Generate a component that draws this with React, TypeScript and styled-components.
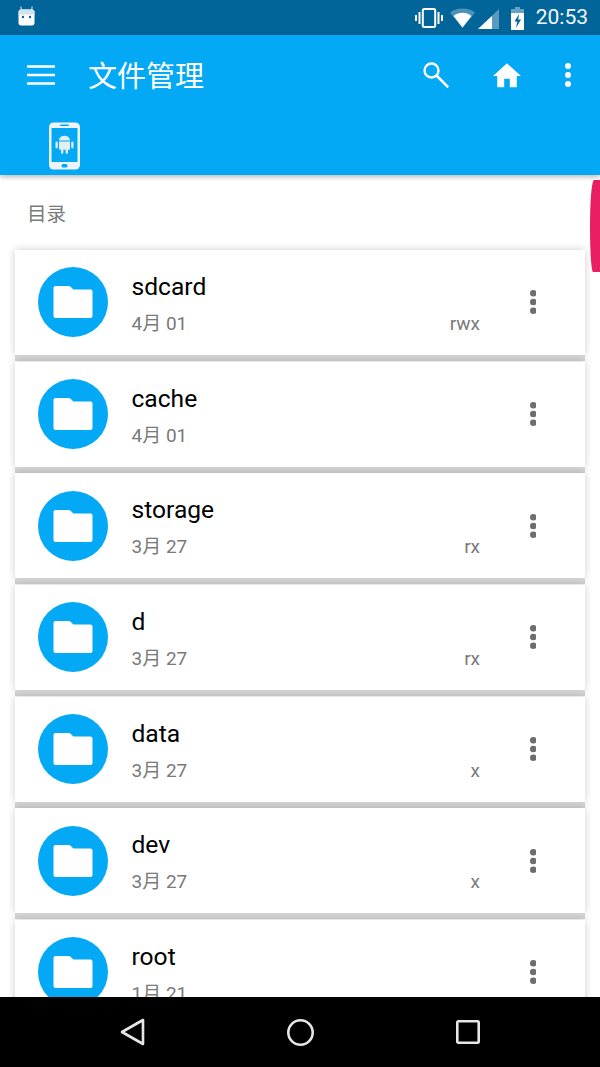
import React from "react";
import styled, { createGlobalStyle } from "styled-components";

const Global = createGlobalStyle`
  html, body { margin: 0; padding: 0; background: #fff; }
  * { box-sizing: border-box; }
`;

const FONT = `Roboto, "Noto Sans CJK SC", sans-serif`;

const Screen = styled.div`
  position: relative;
  width: 600px;
  height: 1067px;
  display: flex;
  flex-direction: column;
  overflow: hidden;
  background: #fff;
  font-family: ${FONT};
`;

const StatusBar = styled.div`
  flex: 0 0 35px;
  height: 35px;
  background: #01659a;
  display: flex;
  align-items: center;
  padding: 0 12px 0 18px;
  color: #fff;
`;

const StatusSpacer = styled.div`
  flex: 1;
`;

const StatusIcons = styled.div`
  display: flex;
  align-items: center;
`;

const Clock = styled.span`
  font-size: 21px;
  line-height: 35px;
  margin-left: 12px;
  color: #f2f7fa;
`;

const BotSvg = styled.svg`
  margin-top: -3px;
`;

const VibrateSvg = styled.svg`
  margin-right: 7px;
`;

const SignalSvg = styled.svg`
  margin: 3px 0 0 3px;
`;

const BatterySvg = styled.svg`
  margin: 2px 0 0 12px;
`;

const AppBar = styled.header`
  flex: 0 0 140px;
  height: 140px;
  background: #03a9f4;
  box-shadow: 0 2px 5px rgba(0, 0, 0, 0.28);
  z-index: 2;
  display: flex;
  flex-direction: column;
`;

const TitleRow = styled.div`
  height: 80px;
  display: flex;
  align-items: center;
  padding-left: 27px;
  color: #fff;
`;

const Title = styled.h1`
  margin: 4px 0 0 33px;
  flex: 1;
  font-size: 29px;
  font-weight: 400;
  line-height: 76px;
  color: #fff;
`;

const ActionGroup = styled.div`
  display: flex;
  align-items: center;
  gap: 44px;
  padding-right: 29px;
`;

const TabRow = styled.div`
  padding: 7px 0 0 49px;
  display: flex;
`;

const Content = styled.main`
  flex: 1;
  min-height: 0;
  overflow: hidden;
`;

const SectionLabel = styled.div`
  height: 74.9px;
  padding: 28px 0 0 27px;
  font-size: 19.5px;
  line-height: 24px;
  color: #7a7a7a;
`;

const List = styled.div`
  display: flex;
  flex-direction: column;
  padding: 0 15px;
  gap: 6.67px;
  position: relative;
`;

const Card = styled.article`
  flex: 0 0 105px;
  height: 105px;
  background: #fff;
  display: flex;
  align-items: center;
  padding-left: 23px;
  position: relative;
  box-shadow: 0 6px 0 #d4d4d4, 0 0 8px rgba(0, 0, 0, 0.2);
`;

const Avatar = styled.div`
  flex: 0 0 70px;
  width: 70px;
  height: 70px;
  border-radius: 50%;
  background: #03a9f4;
  display: flex;
  align-items: center;
  justify-content: center;
`;

const Info = styled.div`
  flex: 1;
  margin-left: 23.5px;
  display: flex;
  flex-direction: column;
  height: 105px;
  padding-top: 21px;
`;

const Name = styled.div`
  font-size: 24.6px;
  line-height: 32px;
  color: #000;
`;

const MetaRow = styled.div`
  margin-top: 9px;
  display: flex;
  justify-content: space-between;
  font-size: 19px;
  line-height: 24px;
  color: #7a7a7a;
`;

const MoreButton = styled.div`
  flex: 0 0 105px;
  padding-left: 1px;
  display: flex;
  justify-content: center;
`;

const Fab = styled.div`
  position: absolute;
  right: 0;
  top: 180px;
  width: 10px;
  height: 92px;
  border-radius: 4px 0 0 3px / 46px 0 0 46px;
  background: #e91e63;
  z-index: 1;
`;

const NavBar = styled.nav`
  flex: 0 0 70px;
  height: 70px;
  background: #000;
  display: flex;
  align-items: center;
  justify-content: center;
  z-index: 3;
  position: relative;
`;

const NavSlot = styled.div`
  width: 168px;
  display: flex;
  justify-content: center;
`;

const Folder = () => (
  <svg width="40" height="34" viewBox="0 0 40 34" aria-hidden="true">
    <path
      d="M2.500 1h13c1 0 1.700.4 2.300 1l2.700 2.500H37.500a2 2 0 0 1 2 2V31a2 2 0 0 1-2 2h-35a2 2 0 0 1-2-2V3a2 2 0 0 1 2-2z"
      fill="#fff"
    />
  </svg>
);

const Dots = ({ color, r, gap }: { color: string; r: number; gap: number }) => (
  <svg width={r * 2} height={r * 2 + gap * 2} aria-hidden="true">
    <circle cx={r} cy={r} r={r} fill={color} />
    <circle cx={r} cy={r + gap} r={r} fill={color} />
    <circle cx={r} cy={r + gap * 2} r={r} fill={color} />
  </svg>
);

const Bot = () => (
  <BotSvg width="17" height="20" viewBox="0 0 17 20" aria-hidden="true">
    <path d="M3.500 5 L2.800 0.500M13.500 5l.7-4.500" stroke="#b9d0dc" strokeWidth="1.300" />
    <path d="M.5 6C.5 4.500 1.500 3.500 3 3.500h11c1.500 0 2.500 1 2.500 2.500v11c0 1.500-1 2.500-2.500 2.500H3c-1.500 0-2.500-1-2.500-2.500z" fill="#fff" />
    <path d="M.5 6C.5 4.500 1.500 3.500 3 3.500h11c1.500 0 2.500 1 2.500 2.500v2.500H.5z" fill="#cfe3ec" />
    <circle cx="5" cy="11" r="1.200" fill="#01659a" />
    <circle cx="12" cy="11" r="1.200" fill="#01659a" />
  </BotSvg>
);

const Vibrate = () => (
  <VibrateSvg width="28" height="22" viewBox="0 0 28 22" aria-hidden="true">
    <rect x="7.800" y="2" width="12.400" height="18" rx="1.500" fill="none" stroke="#fff" strokeWidth="2" />
    <path d="M4.500 5v12M23.500 5v12" stroke="#fff" strokeWidth="2" fill="none" />
    <path d="M1 8v6M27 8v6" stroke="#fff" strokeWidth="2" fill="none" />
  </VibrateSvg>
);

const Wifi = () => (
  <svg width="25" height="20" viewBox="0 0 25 20" aria-hidden="true">
    <path d="M0 4.500C7-1 18-1 25 4.500L12.500 20z" fill="#fff" fillOpacity="0.3" />
    <path d="M3.500 8C9 3.800 16 3.800 21.500 8L12.500 19.500z" fill="#fff" />
  </svg>
);

const Signal = () => (
  <SignalSvg width="21" height="20" viewBox="0 0 21 20" aria-hidden="true">
    <path d="M0 20 21 0v20z" fill="#fff" fillOpacity="0.35" />
    <path d="M0 20 14 7v13z" fill="#fff" />
  </SignalSvg>
);

const Battery = () => (
  <BatterySvg width="13" height="23" viewBox="0 0 13 23" aria-hidden="true">
    <path d="M4 0h5v2h4v6H0V2h4z" fill="#fff" fillOpacity="0.4" />
    <path d="M0 6h13v17H0z" fill="#fff" />
    <path d="M8 7 3.500 14.500h2.800L5 21l5-8.500H7.200z" fill="#01659a" />
  </BatterySvg>
);

const Menu = () => (
  <svg width="28" height="20" viewBox="0 0 28 20" aria-hidden="true">
    <path d="M0 1.500h28M0 10h28M0 18.500h28" stroke="#fff" strokeWidth="2.600" fill="none" />
  </svg>
);

const Search = () => (
  <svg width="26" height="26" viewBox="0 0 26 26" aria-hidden="true">
    <circle cx="8.500" cy="8.500" r="7" fill="none" stroke="#fff" strokeWidth="2.400" />
    <path d="M13.500 13.500 25.200 25.200" stroke="#fff" strokeWidth="2.600" fill="none" />
  </svg>
);

const Home = () => (
  <svg width="28" height="25" viewBox="0 0 30 26" aria-hidden="true">
    <path d="M15 0 30 13.500h-4.500V25.500h-7.500V16.500h-6V25.500H4.500V13.500H0z" fill="#fff" />
  </svg>
);

const PhoneAndroid = () => (
  <svg width="31" height="48" viewBox="0 0 31 48" aria-hidden="true">
    <rect x="0" y="0.500" width="31" height="47" rx="4.500" fill="#eef3f5" />
    <rect x="2.500" y="6" width="26" height="34" fill="#03a9f4" />
    <rect x="11" y="2.500" width="9" height="1.600" rx="0.800" fill="#03a9f4" />
    <rect x="12.500" y="42" width="6" height="3.600" rx="1.500" fill="#03a9f4" />
    <path d="M10 18.500a5.500 4.800 0 0 1 11 0z" fill="#e3eef3" />
    <path d="M10 19.500h11v7c0 .8-.5 1.300-1.300 1.300H11.300c-.8 0-1.300-.5-1.300-1.300z" fill="#e3eef3" />
    <rect x="6.500" y="19.500" width="2.300" height="7" rx="1.150" fill="#e3eef3" />
    <rect x="22.200" y="19.500" width="2.300" height="7" rx="1.150" fill="#e3eef3" />
    <rect x="12" y="27" width="2.300" height="5" rx="1.150" fill="#e3eef3" />
    <rect x="16.700" y="27" width="2.300" height="5" rx="1.150" fill="#e3eef3" />
  </svg>
);

const Back = () => (
  <svg width="25" height="28" viewBox="0 0 25 28" aria-hidden="true">
    <path d="M23 2V26L2 14z" fill="none" stroke="#e6e6e6" strokeWidth="2.600" strokeLinejoin="round" />
  </svg>
);

const HomeNav = () => (
  <svg width="27" height="27" viewBox="0 0 27 27" aria-hidden="true">
    <circle cx="13.500" cy="13.500" r="12.200" fill="none" stroke="#e6e6e6" strokeWidth="2.600" />
  </svg>
);

const Recent = () => (
  <svg width="24" height="24" viewBox="0 0 24 24" aria-hidden="true">
    <rect x="1.300" y="1.300" width="21.400" height="21.400" rx="1" fill="none" stroke="#e6e6e6" strokeWidth="2.600" />
  </svg>
);

const ROWS = [
  { name: "sdcard", date: "4月 01", perm: "rwx" },
  { name: "cache", date: "4月 01", perm: "" },
  { name: "storage", date: "3月 27", perm: "rx" },
  { name: "d", date: "3月 27", perm: "rx" },
  { name: "data", date: "3月 27", perm: "x" },
  { name: "dev", date: "3月 27", perm: "x" },
  { name: "root", date: "1月 21", perm: "" },
];

export default function App() {
  return (
    <Screen>
      <Global />
      <StatusBar>
        <Bot />
        <StatusSpacer />
        <StatusIcons>
          <Vibrate />
          <Wifi />
          <Signal />
          <Battery />
          <Clock>20:53</Clock>
        </StatusIcons>
      </StatusBar>
      <AppBar>
        <TitleRow>
          <Menu />
          <Title>文件管理</Title>
          <ActionGroup>
            <Search />
            <Home />
            <Dots color="#fff" r={3} gap={9} />
          </ActionGroup>
        </TitleRow>
        <TabRow>
          <PhoneAndroid />
        </TabRow>
      </AppBar>
      <Content>
        <SectionLabel>目录</SectionLabel>
        <List>
          {ROWS.map((r) => (
            <Card key={r.name}>
              <Avatar>
                <Folder />
              </Avatar>
              <Info>
                <Name>{r.name}</Name>
                <MetaRow>
                  <span>{r.date}</span>
                  <span>{r.perm}</span>
                </MetaRow>
              </Info>
              <MoreButton>
                <Dots color="#6e6e6e" r={3.3} gap={8.7} />
              </MoreButton>
            </Card>
          ))}
        </List>
      </Content>
      <Fab />
      <NavBar>
        <NavSlot>
          <Back />
        </NavSlot>
        <NavSlot>
          <HomeNav />
        </NavSlot>
        <NavSlot>
          <Recent />
        </NavSlot>
      </NavBar>
    </Screen>
  );
}
